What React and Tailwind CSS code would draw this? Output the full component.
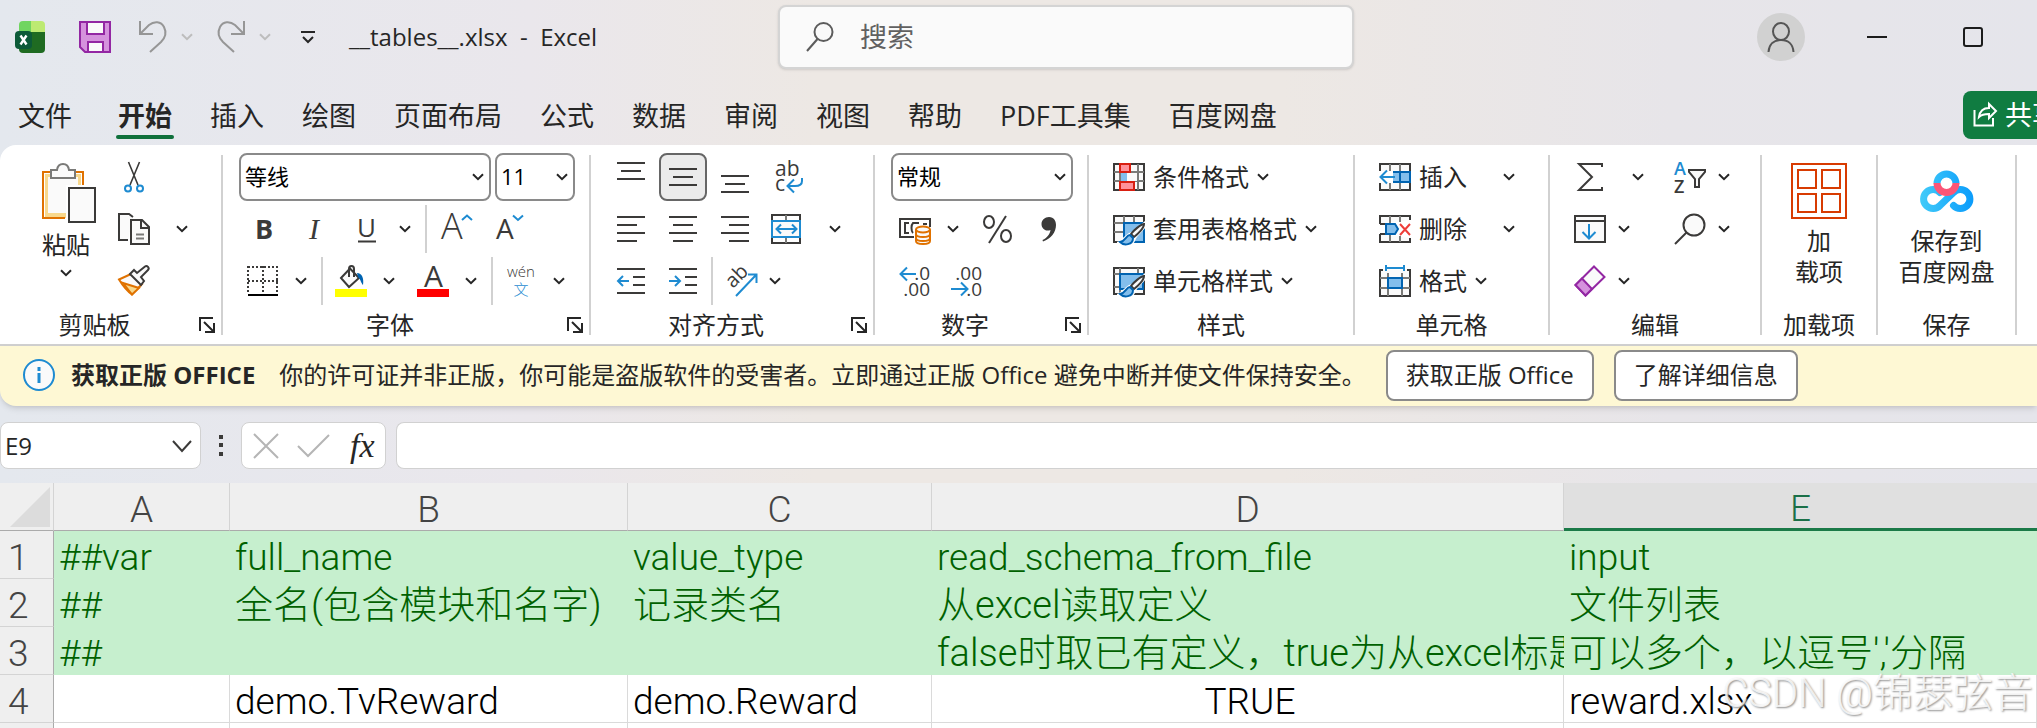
import React, { useState } from "react";
import clsx from "clsx";

const BLUE = "#1e8bd1";
const DARK = "#3b3a39";

const Svg = ({ w = 32, h = 32, children, className }) => (
  <svg
    width={w}
    height={h}
    viewBox={`0 0 ${w} ${h}`}
    fill="none"
    stroke={DARK}
    strokeWidth="2"
    className={clsx("shrink-0 overflow-visible", className)}
    aria-hidden="true"
  >
    {children}
  </svg>
);

const Glyph = ({ x, y, size, fill = DARK, weight, children, ...rest }) => (
  <text x={x} y={y} fontSize={size} fill={fill} fontWeight={weight} stroke="none" {...rest}>
    {children}
  </text>
);

const Chevron = ({ color = "#262626" }) => (
  <Svg w={12} h={8}>
    <path d="M1 1.2L6 6.2L11 1.2" stroke={color} />
  </Svg>
);

/* ---------- Title bar icons ---------- */

const ExcelLogo = () => (
  <Svg w={30} h={32}>
    <g stroke="none">
      <path d="M4 11V4a4 4 0 0 1 4-4h8v11z" fill="#70d560" />
      <path d="M16 0h10a4 4 0 0 1 4 4v7H16z" fill="#bdea72" />
      <path d="M4 11h26v17a4 4 0 0 1-4 4H8a4 4 0 0 1-4-4z" fill="#1f6b22" />
      <rect y="10" width="17" height="18" rx="4" fill="#0c5a38" />
    </g>
    <path d="M5.5 14.5L11.5 23.5M11.5 14.5L5.5 23.5" stroke="#fff" strokeWidth="2.4" />
  </Svg>
);

const SaveIcon = () => (
  <Svg>
    <path d="M1 1H31V31H6L1 26Z" fill="#d592dd" stroke="#9327a3" />
    <rect x="8" y="1" width="17" height="12" fill="#fafafa" stroke="#9327a3" />
    <rect x="9" y="21" width="15" height="10" fill="#fafafa" stroke="#9327a3" />
  </Svg>
);

const UndoIcon = () => (
  <Svg w={28} h={32}>
    <path d="M1 0V13H14M1 13L10 4C15 0 22 0 25 6C28 12 26 17 22 21L11 31" stroke="#969696" />
  </Svg>
);

const RedoIcon = () => (
  <Svg w={28} h={32}>
    <path d="M27 0V13H14M27 13L18 4C13 0 6 0 3 6C0 12 2 17 6 21L17 31" stroke="#969696" />
  </Svg>
);

const SearchIcon = ({ color = "#5c5c5c" }) => (
  <Svg w={28} h={30}>
    <circle cx="17.500" cy="10" r="9" stroke={color} fill="#fafafa" />
    <path d="M11.500 17L1 29" stroke={color} />
  </Svg>
);

const PersonIcon = () => (
  <Svg w={28} h={30}>
    <ellipse cx="14" cy="9.500" rx="8" ry="8.500" stroke="#555" />
    <path d="M1.500 30C2 22 7 18 14 18S26 22 26.500 30" stroke="#555" />
  </Svg>
);

const ShareIcon = () => (
  <Svg w={24} h={24}>
    <path d="M1.500 7V22.500H20V15" stroke="#fff" />
    <path d="M6 14C7 7 11 5 16 5V1L23 8L16 15V11C12 11 9 11 6 14Z" stroke="#fff" />
  </Svg>
);

/* ---------- Clipboard ---------- */

const PasteIcon = () => (
  <Svg w={64} h={60}>
    <rect x="11" y="11" width="36" height="44" fill="#f8d88c" stroke="none" />
    <rect x="14" y="14" width="30" height="36" fill="#fafafa" stroke="none" />
    <path d="M31 55H9V9H49V22" stroke="#e07200" />
    <path d="M17 7H23C24 -1 34 -1 35 7H41V15H17Z" fill="#fafafa" stroke="#7a7a78" />
    <rect x="32" y="22" width="30" height="38" fill="#fff" stroke="none" />
    <rect x="35" y="25" width="26" height="34" fill="#fafafa" />
  </Svg>
);

const CutIcon = () => (
  <Svg>
    <path d="M10.500 1L20 24M21.500 1L12 24" strokeWidth="1.6" />
    <circle cx="10" cy="27.500" r="3" stroke={BLUE} />
    <circle cx="22" cy="27.500" r="3" stroke={BLUE} />
  </Svg>
);

const CopyIcon = () => (
  <Svg>
    <path d="M10 27H1V1H11L15 4" fill="#fafafa" />
    <path d="M13 7H24L31 14V31H13Z" fill="#fafafa" />
    <path d="M23 7V15H31" />
    <path d="M18 21.500H26M18 25.500H26" stroke="#7a7a78" />
  </Svg>
);

const BrushIcon = () => (
  <Svg>
    <path d="M13 9L1 14.500C5 21 9 26 14 29.500L24 19Z" fill="#fafafa" stroke="#e07200" />
    <path d="M5 18L21 23L14 29.500Z" fill="#f8d88c" stroke="#e07200" />
    <path d="M16 5L19 8L27 1.500C29 0 32 3 30 5L23 12L26 16L23 20L12 9Z" fill="#fafafa" />
  </Svg>
);

/* ---------- Font ---------- */

const BoldIcon = () => (
  <Svg>
    <Glyph x="8" y="26" size="27" weight="700">B</Glyph>
  </Svg>
);

const ItalicIcon = () => (
  <Svg>
    <Glyph x="10" y="26" size="30" fontStyle="italic" fontFamily="Liberation Serif">I</Glyph>
  </Svg>
);

const UnderlineIcon = () => (
  <Svg>
    <Glyph x="6" y="24" size="26">U</Glyph>
    <path d="M7 28.500H25" />
  </Svg>
);

const GrowIcon = () => (
  <Svg>
    <Glyph x="0" y="26" size="36" weight="300">A</Glyph>
    <path d="M21 7L26 2.500L31 7" stroke={BLUE} />
  </Svg>
);

const ShrinkIcon = () => (
  <Svg>
    <Glyph x="3" y="26" size="28">A</Glyph>
    <path d="M20 2.500L25 7L30 2.500" stroke={BLUE} />
  </Svg>
);

const BordersIcon = () => (
  <Svg>
    <path
      d="M1 2H31M1 16H31M1 1V28M16 1V28M30 1V28"
      strokeDasharray="2 2"
    />
    <path d="M1 30H31" stroke="#000" />
  </Svg>
);

const FillColorIcon = () => (
  <Svg>
    <path d="M6 13L15 3.500L24 13L14 22Z" fill="#fafafa" />
    <path d="M14 12V4C14 0 19 0 19 4V12" />
    <path d="M22 8C27 8 29 13 28 20C26 18 26 15 23 12Z" fill="#0063b1" stroke="none" />
    <rect y="24" width="32" height="8" fill="#ffff00" stroke="none" />
  </Svg>
);

const FontColorIcon = () => (
  <Svg>
    <Glyph x="7" y="22" size="30">A</Glyph>
    <rect y="24" width="32" height="8" fill="#ff0000" stroke="none" />
  </Svg>
);

const PhoneticIcon = () => (
  <Svg>
    <Glyph x="16" y="12" size="15" weight="300" textAnchor="middle">wén</Glyph>
    <Glyph x="16" y="30" size="15" weight="300" fill={BLUE} textAnchor="middle">文</Glyph>
  </Svg>
);

/* ---------- Alignment ---------- */

const LinesIcon = ({ d }) => (
  <Svg>
    <path d={d} />
  </Svg>
);

const WrapIcon = () => (
  <Svg>
    <Glyph x="4" y="15" size="21">ab</Glyph>
    <Glyph x="4" y="30" size="21">c</Glyph>
    <path d="M31 17V20C31 24 28 25 24 25H17M23 18.500L16.500 25L23 31.500" stroke={BLUE} />
  </Svg>
);

const MergeIcon = () => (
  <Svg>
    <rect x="1" y="2" width="28" height="28" />
    <path d="M15 2V8M15 25V30" stroke="#7a7a78" />
    <rect x="1" y="8" width="28" height="16" fill="#fafafa" stroke={BLUE} />
    <path d="M6 16H25M10 11.500L5.500 16L10 20.500M21 11.500L25.500 16L21 20.500" stroke={BLUE} />
  </Svg>
);

const OutdentIcon = () => (
  <Svg>
    <path d="M2 4H30M18 12H30M18 20H30M2 28H30" />
    <path d="M3 16H14M8 11L3 16L8 21" stroke={BLUE} />
  </Svg>
);

const IndentIcon = () => (
  <Svg>
    <path d="M2 4H30M18 12H30M18 20H30M2 28H30" />
    <path d="M2 16H13M8 11L13 16L8 21" stroke={BLUE} />
  </Svg>
);

const OrientationIcon = () => (
  <Svg>
    <Glyph x="0" y="0" size="20" transform="translate(8 24) rotate(-45)">ab</Glyph>
    <path d="M11 31L31 10M23 9.500H31.500V18" stroke={BLUE} />
  </Svg>
);

/* ---------- Number ---------- */

const CurrencyIcon = () => (
  <Svg>
    <rect x="1" y="6" width="30" height="18" />
    <path d="M10 10H6V20H10M20 10H14C12 12 12 18 14 20M24 11H28" />
    <path d="M15 14H32V32H15Z" fill="#fff" stroke="none" />
    <path d="M17 16.500V28C17 32 31 32 31 28V16.500" fill="#fafafa" stroke="#e07200" />
    <ellipse cx="24" cy="16.500" rx="7" ry="3" fill="#fafafa" stroke="#e07200" />
    <path d="M17 21C17 25 31 25 31 21M17 25C17 29 31 29 31 25" stroke="#e07200" />
  </Svg>
);

const PercentIcon = () => (
  <Svg>
    <ellipse cx="8" cy="9" rx="5" ry="6" />
    <ellipse cx="25" cy="23" rx="5" ry="6" />
    <path d="M25 3L8 30" />
  </Svg>
);

const CommaIcon = () => (
  <Svg>
    <path
      d="M16 4C21 4 23 8 23 12C23 19 18 26 10 28.500L9.500 27C14 25 17 21 17.500 17C12 19 8.500 15 8.500 11C8.500 7 12 4 16 4Z"
      fill={DARK}
      stroke="none"
    />
  </Svg>
);

const IncreaseDecimalIcon = () => (
  <Svg>
    <Glyph x="31" y="15" size="19" textAnchor="end">.0</Glyph>
    <Glyph x="31" y="31" size="19" textAnchor="end">.00</Glyph>
    <path d="M2 9H17M8 2.500L1.500 9L8 15.500" stroke={BLUE} />
  </Svg>
);

const DecreaseDecimalIcon = () => (
  <Svg>
    <Glyph x="31" y="15" size="19" textAnchor="end">.00</Glyph>
    <Glyph x="31" y="31" size="19" textAnchor="end">.0</Glyph>
    <path d="M0 24H16M10 17.500L16.500 24L10 30.500" stroke={BLUE} />
  </Svg>
);

/* ---------- Styles ---------- */

const ConditionalIcon = () => (
  <Svg>
    <rect x="1" y="3" width="30" height="26" fill="#fafafa" />
    <path d="M1 11H31M1 20H31M7 3V29M25 3V29" stroke="#7a7a78" />
    <rect x="8" y="12" width="16" height="8" fill="#fafafa" stroke="none" />
    <rect x="8" y="11" width="6" height="10" fill="#83beec" stroke="none" />
    <rect x="7" y="3" width="10" height="8" fill="#ff9199" stroke="#d91f11" />
    <rect x="7" y="21" width="14" height="8" fill="#ff9199" stroke="#d91f11" />
  </Svg>
);

const BrushOverlay = () => (
  <>
    <path d="M32 8L20 19C14 19 12 25 4 29V34H17C22 30 22 27 24 24L33 14Z" fill="#fff" stroke="none" />
    <path d="M31 11C28 11 20 18 18 21L21 24C25 21 31 15 31 11Z" fill="#fafafa" />
    <path d="M17 22C13 22 13 28 7 29C11 33 20 32 20 25Z" fill="#83beec" stroke="#0063b1" />
  </>
);

const TableFormatIcon = () => (
  <Svg>
    <rect x="1" y="3" width="30" height="26" fill="#fafafa" />
    <path d="M1 10H31M1 19H10M11 3V29M21 3V10" stroke="#7a7a78" />
    <path d="M11 10H31V29H11Z" fill="#83beec" stroke="#0063b1" />
    <BrushOverlay />
  </Svg>
);

const CellStyleIcon = () => (
  <Svg>
    <rect x="1" y="3" width="30" height="26" fill="#fafafa" />
    <path d="M1 9H31M7 3V29M1 22H7M25 3V9" stroke="#7a7a78" />
    <path d="M7 9H30V24H7Z" fill="#83beec" stroke="#0063b1" />
    <BrushOverlay />
  </Svg>
);

/* ---------- Cells ---------- */

const InsertIcon = () => (
  <Svg>
    <rect x="1" y="3" width="30" height="26" fill="#fafafa" />
    <path d="M11 3V29M21 3V29" stroke="#7a7a78" />
    <rect y="10" width="32" height="12" fill="#fff" stroke="none" />
    <path d="M14 11H31V21H14M21 11V21" fill="#83beec" stroke="#0063b1" />
    <path d="M0 10H12V22H0Z" fill="#fff" stroke="none" />
    <path d="M2 16H16M8 9.500L1.500 16L8 22.500" stroke={BLUE} />
  </Svg>
);

const DeleteIcon = () => (
  <Svg>
    <path d="M1 11V3H31V7M1 21V29H31V25M1 11H7M1 21H7" fill="#fafafa" />
    <path d="M11 3V10M21 3V9M11 22V29M21 23V29" stroke="#7a7a78" />
    <path d="M7 11H16L19 16L16 21H7Z" fill="#83beec" stroke="#0063b1" />
    <path d="M21 11L31 22M31 11L21 22" stroke="#ee3e3a" />
  </Svg>
);

const FormatIcon = () => (
  <Svg>
    <path d="M4 5H1V31H31V5H28" fill="#fafafa" />
    <path d="M1 13H31M1 23H31M9 8V31M23 8V31" stroke="#7a7a78" />
    <rect x="9" y="13" width="14" height="10" fill="#83beec" stroke="#0063b1" />
    <path d="M7 3H25M7 0V6M25 0V6" stroke={BLUE} />
  </Svg>
);

/* ---------- Editing ---------- */

const SumIcon = () => (
  <Svg>
    <path d="M28 6V3H5L18 16L5 29H28V26" />
  </Svg>
);

const SortFilterIcon = () => (
  <Svg>
    <Glyph x="0" y="14" size="18" fill={BLUE} weight="600">A</Glyph>
    <Glyph x="0" y="32" size="18" weight="600">Z</Glyph>
    <path d="M15 9H31V11L25 18V26H21V18L15 11Z" fill="#fafafa" />
  </Svg>
);

const FillIcon = () => (
  <Svg>
    <rect x="1" y="3" width="30" height="26" fill="#fafafa" />
    <path d="M1 8H31" />
    <path d="M15 11V25M8.500 19L15 25.500L21.500 19" stroke={BLUE} />
  </Svg>
);

const FindIcon = () => (
  <Svg>
    <circle cx="20" cy="12" r="10.500" fill="#fafafa" />
    <path d="M12.500 19.500L1 31" />
  </Svg>
);

const EraserIcon = () => (
  <Svg>
    <path d="M20 1.500L30.500 12L11.500 30.500L1.500 20Z" fill="#fafafa" stroke="#9327a3" />
    <path d="M8 13.500L18 24L11.500 30.500L1.500 20Z" fill="#d592dd" stroke="#9327a3" />
  </Svg>
);

const AddinsIcon = () => (
  <Svg w={56} h={56}>
    <g stroke="#d83b01">
      <rect x="1" y="1" width="54" height="54" />
      <rect x="7" y="7" width="18" height="18" />
      <rect x="31" y="7" width="18" height="18" />
      <rect x="7" y="31" width="18" height="18" />
      <rect x="31" y="31" width="18" height="18" />
    </g>
  </Svg>
);

const NetdiskIcon = () => (
  <Svg w={54} h={42}>
    <defs>
      <linearGradient id="netdisk" x1="0" x2="54" y1="0" y2="0" gradientUnits="userSpaceOnUse">
        <stop offset="0" stopColor="#41cbf9" />
        <stop offset="1" stopColor="#0a9bfb" />
      </linearGradient>
    </defs>
    <g strokeWidth="7" strokeLinecap="round">
      <path
        d="M33.500 35.500A9.500 9.500 0 1 0 33.500 22.500L20 35.500A9.500 9.500 0 1 1 20 22.500"
        stroke="url(#netdisk)"
      />
      <path d="M17 13.500A9.500 9.500 0 0 1 36 13.500" stroke="url(#netdisk)" strokeLinecap="butt" />
      <path d="M17 13A9.500 9.500 0 0 0 36 13" stroke="#fb5677" strokeLinecap="butt" />
    </g>
  </Svg>
);

/* ---------- Ribbon parts ---------- */

const IconButton = ({ label, active, children }) => (
  <button
    type="button"
    aria-label={label}
    className={clsx(
      "flex h-12 w-12 shrink-0 items-center justify-center rounded-lg",
      active && "border-2 border-[#666] bg-[#ebebeb]"
    )}
  >
    {children}
  </button>
);

const MenuButton = ({ label, className = "w-7" }) => (
  <button
    type="button"
    aria-label={label}
    className={clsx("flex h-12 shrink-0 items-center justify-center", className)}
  >
    <Chevron />
  </button>
);

const TextButton = ({ icon, text, menuClass }) => (
  <div className="flex h-12 items-center">
    <button type="button" className="flex items-center gap-2 pl-2">
      {icon}
      {text}
    </button>
    <MenuButton label={`${text}选项`} className={clsx("w-7", menuClass)} />
  </div>
);

const Divider = ({ className }) => (
  <div className={clsx("h-12 w-0.5 shrink-0 bg-[#d1d1d1]", className)} />
);

const Row = ({ className, children }) => (
  <div className={clsx("flex h-12", className)}>{children}</div>
);

const Combo = ({ label, className, options }) => (
  <div className={clsx("relative h-12", className)}>
    <select
      aria-label={label}
      className="h-full w-full appearance-none rounded-lg border-2 border-[#8a8a8a] bg-white pl-1 text-[22px] text-black"
    >
      {options.map((o) => (
        <option key={o}>{o}</option>
      ))}
    </select>
    <span className="pointer-events-none absolute inset-y-0 right-[7px] flex items-center">
      <Chevron />
    </span>
  </div>
);

const Group = ({ title, launcher, className, bodyClass = "pl-4", children }) => (
  <>
    <section className={clsx("flex shrink-0 flex-col", className)}>
      <div className={clsx("flex h-[152px] flex-col gap-1", bodyClass)}>{children}</div>
      <div className="mt-1 flex h-8 items-center">
        <h2 className="flex-1 text-center leading-[30px]">{title}</h2>
        {launcher && (
          <button type="button" aria-label={`${title}设置`} className="mr-1.5 ml-2.5">
            <Svg w={16} h={16}>
              <path d="M1 14V1H14M5 5L14 14M15 6V15H6" stroke="#262626" />
            </Svg>
          </button>
        )}
      </div>
    </section>
    <div className="mt-0.5 mb-1.5 w-0.5 shrink-0 bg-[#d1d1d1]" />
  </>
);

const Ribbon = () => (
  <div className="flex overflow-hidden rounded-tl-2xl border-b-2 border-[#cfcfcf] bg-white pt-2 pb-[3px] text-2xl text-[#262626]">
    <Group title="剪贴板" launcher className="w-[221px]" bodyClass="pl-[34px]">
      <div className="flex gap-3">
        <button type="button" className="flex w-16 flex-col items-center pt-2.5">
          <PasteIcon />
          <span className="mt-1.5 leading-8">粘贴</span>
          <span className="mt-2">
            <Chevron />
          </span>
        </button>
        <div className="flex flex-col gap-1">
          <Row>
            <IconButton label="剪切"><CutIcon /></IconButton>
          </Row>
          <Row>
            <IconButton label="复制"><CopyIcon /></IconButton>
            <MenuButton label="复制选项" className="ml-3.5 w-5" />
          </Row>
          <Row>
            <IconButton label="格式刷"><BrushIcon /></IconButton>
          </Row>
        </div>
      </div>
    </Group>

    <Group title="字体" launcher className="w-[366px]">
      <Row className="gap-1">
        <Combo label="字体" className="w-[252px]" options={["等线", "宋体", "微软雅黑"]} />
        <Combo label="字号" className="w-20" options={["11", "12", "14"]} />
      </Row>
      <Row>
        <div className="flex gap-1">
          <IconButton label="加粗"><BoldIcon /></IconButton>
          <IconButton label="倾斜"><ItalicIcon /></IconButton>
          <IconButton label="下划线"><UnderlineIcon /></IconButton>
        </div>
        <MenuButton label="下划线选项" />
        <Divider className="mx-1.5" />
        <div className="flex gap-1">
          <IconButton label="增大字号"><GrowIcon /></IconButton>
          <IconButton label="减小字号"><ShrinkIcon /></IconButton>
        </div>
      </Row>
      <Row>
        <IconButton label="边框"><BordersIcon /></IconButton>
        <MenuButton label="边框选项" />
        <Divider className="mr-1 ml-1.5" />
        <IconButton label="填充颜色"><FillColorIcon /></IconButton>
        <MenuButton label="填充颜色选项" className="mr-1.5 w-7" />
        <IconButton label="字体颜色"><FontColorIcon /></IconButton>
        <MenuButton label="字体颜色选项" />
        <Divider className="mr-1 ml-1.5" />
        <IconButton label="拼音"><PhoneticIcon /></IconButton>
        <MenuButton label="拼音选项" />
      </Row>
    </Group>

    <Group title="对齐方式" launcher className="w-[282px]">
      <Row className="gap-1">
        <IconButton label="顶端对齐"><LinesIcon d="M2 2H30M6 10H26M2 18H30" /></IconButton>
        <IconButton label="垂直居中" active><LinesIcon d="M2 8H30M6 16H26M2 24H30" /></IconButton>
        <IconButton label="底端对齐"><LinesIcon d="M2 15H30M6 23H26M2 31H30" /></IconButton>
        <IconButton label="自动换行"><WrapIcon /></IconButton>
      </Row>
      <Row className="gap-1">
        <IconButton label="左对齐"><LinesIcon d="M2 4H30M2 12H22M2 20H30M2 28H22" /></IconButton>
        <IconButton label="居中"><LinesIcon d="M2 4H30M6 12H26M2 20H30M6 28H26" /></IconButton>
        <IconButton label="右对齐"><LinesIcon d="M2 4H30M10 12H30M2 20H30M10 28H30" /></IconButton>
        <IconButton label="合并后居中"><MergeIcon /></IconButton>
        <MenuButton label="合并选项" className="ml-2.5 w-5" />
      </Row>
      <Row>
        <div className="flex gap-1">
          <IconButton label="减少缩进量"><OutdentIcon /></IconButton>
          <IconButton label="增加缩进量"><IndentIcon /></IconButton>
        </div>
        <Divider className="mx-1" />
        <IconButton label="方向"><OrientationIcon /></IconButton>
        <MenuButton label="方向选项" className="w-5" />
      </Row>
    </Group>

    <Group title="数字" launcher className="w-[212px]">
      <Row>
        <Combo label="数字格式" className="w-[182px]" options={["常规", "数值", "货币"]} />
      </Row>
      <Row>
        <IconButton label="会计数字格式"><CurrencyIcon /></IconButton>
        <MenuButton label="会计数字格式选项" className="mr-1.5 w-7" />
        <div className="flex gap-1">
          <IconButton label="百分比样式"><PercentIcon /></IconButton>
          <IconButton label="千位分隔样式"><CommaIcon /></IconButton>
        </div>
      </Row>
      <Row className="gap-1">
        <IconButton label="增加小数位数"><IncreaseDecimalIcon /></IconButton>
        <IconButton label="减少小数位数"><DecreaseDecimalIcon /></IconButton>
      </Row>
    </Group>

    <Group title="样式" className="w-[264px]">
      <TextButton icon={<ConditionalIcon />} text="条件格式" />
      <TextButton icon={<TableFormatIcon />} text="套用表格格式" />
      <TextButton icon={<CellStyleIcon />} text="单元格样式" />
    </Group>

    <Group title="单元格" className="w-[193px]">
      <TextButton icon={<InsertIcon />} text="插入" menuClass="ml-7" />
      <TextButton icon={<DeleteIcon />} text="删除" menuClass="ml-7" />
      <TextButton icon={<FormatIcon />} text="格式" />
    </Group>

    <Group title="编辑" className="w-[210px]">
      <div className="grid grid-cols-[100px_1fr] gap-y-1">
        <Row>
          <IconButton label="自动求和"><SumIcon /></IconButton>
          <MenuButton label="求和选项" className="ml-3.5 w-5" />
        </Row>
        <Row>
          <IconButton label="排序和筛选"><SortFilterIcon /></IconButton>
          <MenuButton label="排序和筛选选项" className="w-5" />
        </Row>
        <Row>
          <IconButton label="填充"><FillIcon /></IconButton>
          <MenuButton label="填充选项" className="w-5" />
        </Row>
        <Row>
          <IconButton label="查找和选择"><FindIcon /></IconButton>
          <MenuButton label="查找选项" className="w-5" />
        </Row>
        <Row>
          <IconButton label="清除"><EraserIcon /></IconButton>
          <MenuButton label="清除选项" className="w-5" />
        </Row>
      </div>
    </Group>

    <Group title="加载项" className="w-[114px]" bodyClass="items-center">
      <button type="button" className="flex flex-col items-center pt-2.5 leading-[31px]">
        <AddinsIcon />
        <span className="mt-1.5">加</span>
        <span>载项</span>
      </button>
    </Group>

    <Group title="保存" className="w-[137px]" bodyClass="items-center">
      <button type="button" className="flex flex-col items-center pt-2.5 leading-[31px]">
        <span className="flex h-14 items-center">
          <NetdiskIcon />
        </span>
        <span className="mt-1.5">保存到</span>
        <span>百度网盘</span>
      </button>
    </Group>
  </div>
);

/* ---------- Window chrome ---------- */

const TitleBar = () => (
  <header className="flex h-[74px] items-start justify-between">
    <div className="flex h-[74px] w-[778px] shrink-0 items-center pl-[15px]">
      <ExcelLogo />
      <button type="button" aria-label="保存" className="ml-[34px]"><SaveIcon /></button>
      <button type="button" aria-label="撤消" className="ml-7"><UndoIcon /></button>
      <button type="button" aria-label="撤消选项" className="ml-3.5"><Chevron color="#bdbdbd" /></button>
      <button type="button" aria-label="恢复" className="ml-6"><RedoIcon /></button>
      <button type="button" aria-label="恢复选项" className="ml-3.5"><Chevron color="#bdbdbd" /></button>
      <button type="button" aria-label="自定义快速访问工具栏" className="ml-[30px]">
        <Svg w={14} h={14}>
          <path d="M0 2H14M2 7L7 12L12 7" stroke="#262626" />
        </Svg>
      </button>
      <h1 className="ml-[34px] text-2xl whitespace-pre text-[#262626]">__tables__.xlsx  -  Excel</h1>
    </div>
    <label className="mt-[5px] flex h-16 w-[576px] items-center rounded-lg border-2 border-[#d4d4d4] bg-[#fafafa] pl-[26px] shadow-sm">
      <SearchIcon />
      <input
        type="search"
        aria-label="搜索"
        placeholder="搜索"
        className="ml-[26px] min-w-0 flex-1 bg-transparent text-[27px] outline-none placeholder:text-[#616161]"
      />
    </label>
    <div className="mr-4 ml-auto flex h-[74px] shrink-0">
      <button type="button" aria-label="帐户" className="flex w-24 items-center justify-center">
        <span className="flex h-12 w-12 items-center justify-center rounded-full bg-[#d1d1d1]">
          <PersonIcon />
        </span>
      </button>
      <button type="button" aria-label="最小化" className="flex w-24 items-center justify-center">
        <span className="h-0.5 w-5 bg-[#1c1c1c]" />
      </button>
      <button type="button" aria-label="最大化" className="flex w-24 items-center justify-center">
        <span className="h-5 w-5 rounded-[3px] border-2 border-[#1c1c1c]" />
      </button>
    </div>
  </header>
);

const TABS = ["文件", "开始", "插入", "绘图", "页面布局", "公式", "数据", "审阅", "视图", "帮助", "PDF工具集", "百度网盘"];

const TabBar = ({ active, onSelect }) => (
  <nav className="flex h-[71px] items-start overflow-hidden pt-[17px] pl-[18px] text-[27px] leading-[50px] text-[#262626]">
    <div className="flex shrink-0 gap-[38px]">
      {TABS.map((tab, i) => (
        <button
          key={tab}
          type="button"
          onClick={() => onSelect(tab)}
          className={clsx("relative", i === 0 && "mr-2", tab === active && "font-bold")}
        >
          {tab}
          {tab === active && (
            <span className="absolute -inset-x-0.5 bottom-0.5 h-1 rounded-sm bg-[#0f703b]" />
          )}
        </button>
      ))}
    </div>
    <button
      type="button"
      className="-mr-7 ml-auto flex h-12 shrink-0 items-center gap-2 rounded-lg bg-[#107c41] pr-1.5 pl-2.5 text-white"
    >
      <ShareIcon />
      共享
    </button>
  </nav>
);

const LicenseBar = () => (
  <div className="flex h-[60px] items-center overflow-hidden rounded-bl-2xl bg-[#fef8d4] pb-0.5 pl-[23px] text-2xl whitespace-nowrap text-[#262626] shadow-md">
    <Svg>
      <circle cx="16" cy="16" r="15" fill="#fafafa" stroke={BLUE} />
      <path d="M16 8V12M16 14V24" stroke={BLUE} strokeWidth="3" />
    </Svg>
    <strong className="ml-4 font-bold">获取正版 OFFICE</strong>
    <span className="ml-6">
      你的许可证并非正版，你可能是盗版软件的受害者。立即通过正版 Office 避免中断并使文件保持安全。
    </span>
    <button type="button" className="ml-5 h-[51px] rounded-lg border-2 border-[#8a8a8a] bg-white px-[18px]">
      获取正版 Office
    </button>
    <button type="button" className="ml-5 h-[51px] rounded-lg border-2 border-[#8a8a8a] bg-white px-[18px]">
      了解详细信息
    </button>
  </div>
);

const FormulaBar = () => (
  <div className="flex h-[77px] items-start pt-4">
    <div className="flex h-[47px] w-[201px] shrink-0 items-center rounded-lg border border-[#d1d1d1] bg-white pr-2 pl-1">
      <input
        aria-label="名称框"
        defaultValue="E9"
        className="min-w-0 flex-1 bg-transparent text-2xl text-[#262626] outline-none"
      />
      <button type="button" aria-label="名称列表">
        <Svg w={20} h={12}>
          <path d="M1 1L10 11L19 1" />
        </Svg>
      </button>
    </div>
    <Svg w={4} h={47} className="mx-[18px]">
      <path d="M2 13V17M2 21V25M2 30V34" strokeWidth="4" />
    </Svg>
    <div className="flex h-[47px] w-[145px] shrink-0 items-center rounded-lg border border-[#d1d1d1] bg-white pl-3">
      <button type="button" aria-label="取消">
        <Svg w={24} h={24}>
          <path d="M0 0L24 24M24 0L0 24" stroke="#b5b5b5" />
        </Svg>
      </button>
      <button type="button" aria-label="输入" className="ml-5">
        <Svg w={32} h={24}>
          <path d="M0 12L10 22L31 1" stroke="#b5b5b5" />
        </Svg>
      </button>
      <button
        type="button"
        aria-label="插入函数"
        className="ml-5 font-['Liberation_Serif',serif] text-[34px] leading-10 text-[#262626] italic"
      >
        fx
      </button>
    </div>
    <input
      aria-label="编辑栏"
      className="ml-2.5 h-[47px] min-w-0 flex-1 rounded-l-lg border border-r-0 border-[#d1d1d1] bg-white px-3 text-2xl outline-none"
    />
  </div>
);

/* ---------- Sheet ---------- */

const COLUMNS = ["A", "B", "C", "D", "E"];

const ROWS = [
  ["##var", "full_name", "value_type", "read_schema_from_file", "input"],
  ["##", "全名(包含模块和名字)", "记录类名", "从excel读取定义", "文件列表"],
  ["##", "", "", "false时取已有定义，true为从excel标题", "可以多个，以逗号','分隔"],
  ["", "demo.TvReward", "demo.Reward", "TRUE", "reward.xlsx"],
  ["", "", "", "", ""],
];

const isHeaderRow = (row) => row[0].startsWith("##");
const hasChinese = (text) => /[\u4e00-\u9fff]/.test(text);

const Sheet = () => (
  <table className="w-full table-fixed border-separate border-spacing-0 bg-white font-['Roboto','Noto_Sans_CJK_SC',sans-serif] text-[37px] leading-[41px] font-light">
    <colgroup>
      <col className="w-[54px]" />
      <col className="w-44" />
      <col className="w-[398px]" />
      <col className="w-[304px]" />
      <col className="w-[632px]" />
      <col />
    </colgroup>
    <thead>
      <tr className="h-12 bg-[#efefef] text-[#444]">
        <th className="border-r border-b border-r-[#d4d4d4] border-b-[#ababab] p-0">
          <svg width="40" height="40" viewBox="0 0 40 40" className="ml-2.5" aria-hidden="true">
            <path d="M40 0V40H0Z" fill="#dcdcdc" />
          </svg>
        </th>
        {COLUMNS.map((c) => (
          <th
            key={c}
            scope="col"
            className={clsx(
              "p-0 pt-1.5 text-center font-light",
              c === "E"
                ? "border-b-3 border-[#1b7a48] bg-[#e0e0e0] leading-[39px] text-[#1b7048]"
                : "border-r border-b border-r-[#d4d4d4] border-b-[#ababab]"
            )}
          >
            {c}
          </th>
        ))}
      </tr>
    </thead>
    <tbody>
      {ROWS.map((row, i) => (
        <tr
          key={i}
          className={clsx("h-12", isHeaderRow(row) ? "bg-[#c6efce] text-[#006100]" : "text-black")}
        >
          <th
            scope="row"
            className="border-r border-b border-r-[#ababab] border-b-[#d4d4d4] bg-[#efefef] p-0 pt-1.5 pl-2 text-left font-light text-[#444]"
          >
            {i + 1}
          </th>
          {row.map((text, j) => (
            <td
              key={j}
              className={clsx(
                "overflow-hidden p-0 pt-1.5 pl-[5px] whitespace-nowrap",
                isHeaderRow(row) ? "border-b border-[#c6efce]" : "border-r border-b border-[#dadada]",
                hasChinese(text) && "text-[38px]",
                text === "TRUE" && "text-center"
              )}
            >
              {text}
            </td>
          ))}
        </tr>
      ))}
    </tbody>
  </table>
);

const App = () => {
  const [activeTab, setActiveTab] = useState("开始");

  return (
    <div className="relative h-screen overflow-hidden bg-[linear-gradient(to_right,#e4e8ee,#eae7ec_26%,#ede8e4_40%,#ede8e4_63%,#e7e5e9_82%,#e5e5eb)] font-['Open_Sans','Noto_Sans_CJK_SC',sans-serif]">
      <TitleBar />
      <TabBar active={activeTab} onSelect={setActiveTab} />
      <Ribbon />
      <LicenseBar />
      <FormulaBar />
      <Sheet />
      <div className="pointer-events-none absolute right-1 bottom-2.5 font-['Roboto','Noto_Sans_CJK_SC',sans-serif] text-[40px] leading-[48px] font-light text-white/80 [text-shadow:1px_1px_2px_#8c8c8c]">
        CSDN @锦瑟弦音
      </div>
    </div>
  );
};

export default App;
